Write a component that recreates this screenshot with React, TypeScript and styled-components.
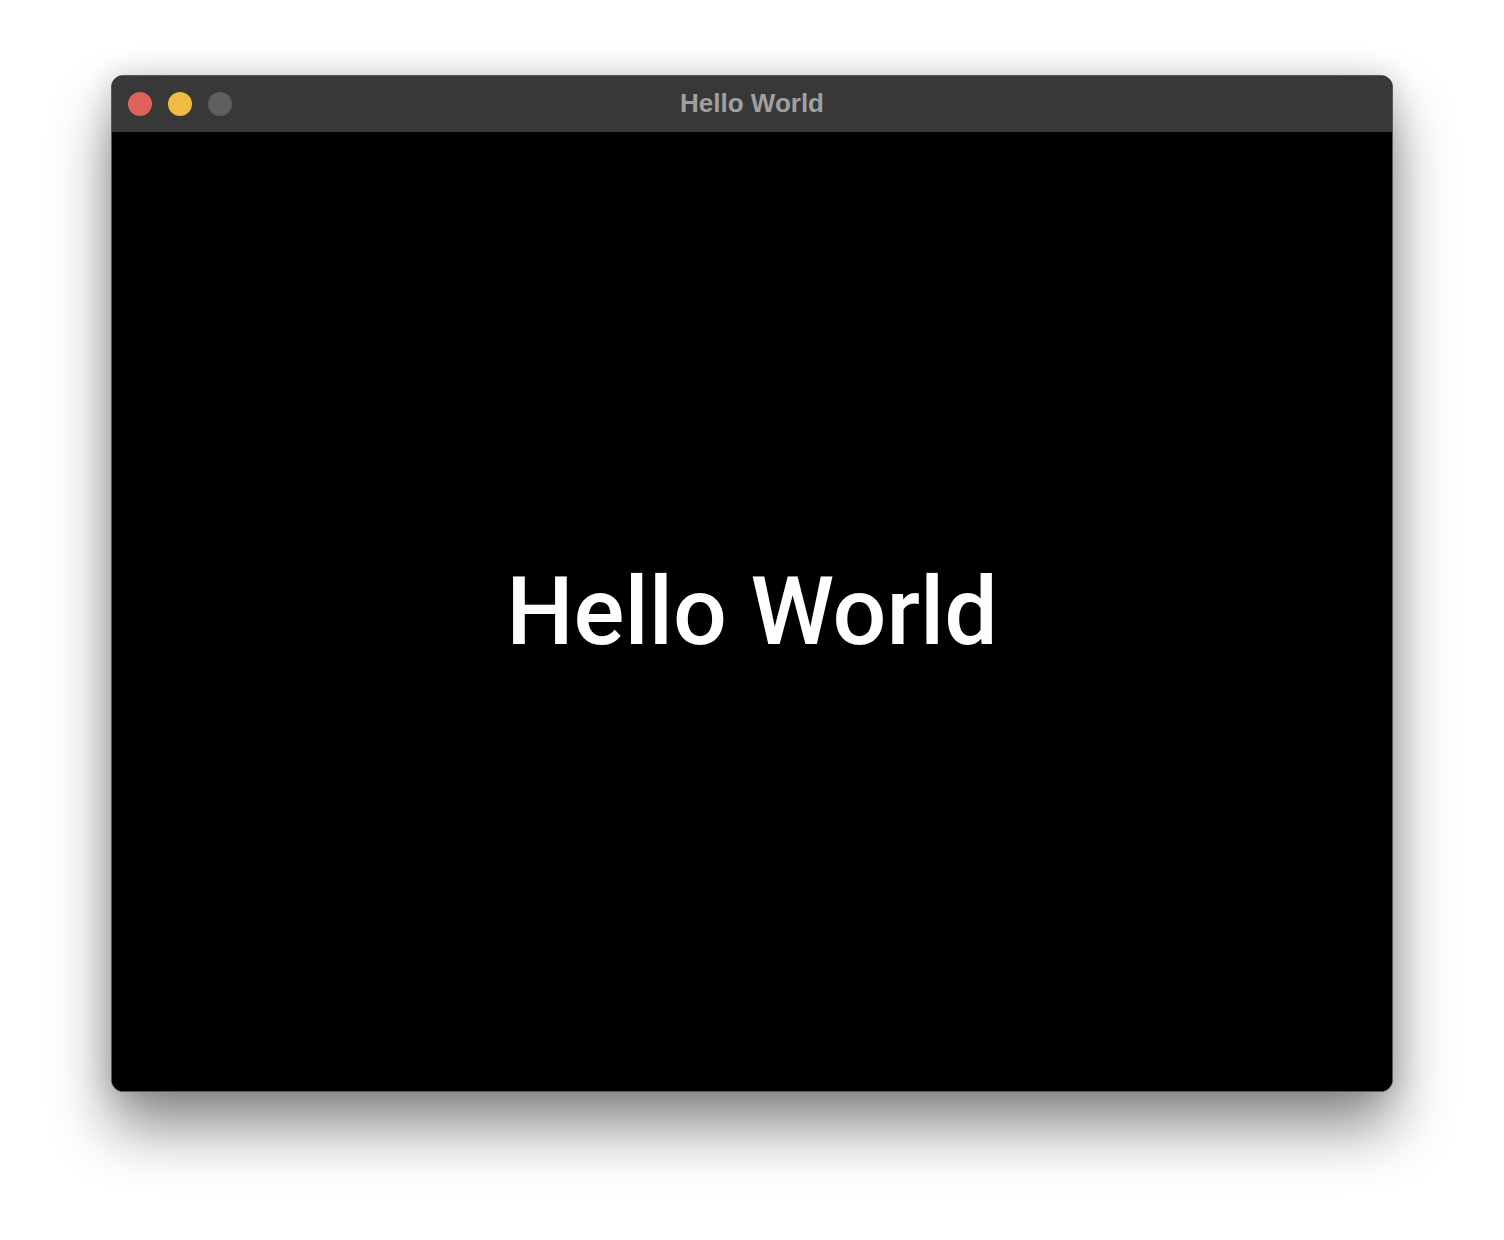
import React from "react";
import styled, { createGlobalStyle } from "styled-components";

const Global = createGlobalStyle`
  html, body { margin: 0; padding: 0; background: #ffffff; }
  body { font-family: Roboto, "Liberation Sans", sans-serif; }
`;

const Page = styled.div`
  width: 1504px;
  height: 1240px;
  display: flex;
  justify-content: center;
  padding-top: 75px;
  box-sizing: border-box;
  background: #ffffff;
`;

const Window = styled.div`
  width: 1282px;
  height: 1017px;
  box-sizing: border-box;
  border-radius: 12px;
  border: 1px solid #5a5a5a;
  background: #000;
  overflow: hidden;
  display: flex;
  flex-direction: column;
  box-shadow: 0 36px 60px rgba(0, 0, 0, 0.45), 0 0 30px rgba(0, 0, 0, 0.16);
`;

const TitleBar = styled.div`
  height: 56px;
  flex: none;
  background: #383838;
  display: flex;
  align-items: center;
  position: relative;
  padding-left: 16px;
  padding-bottom: 1px;
  box-sizing: border-box;
  gap: 16px;
`;

const Light = styled.span<{ $color: string }>`
  width: 24px;
  height: 24px;
  border-radius: 50%;
  background: ${(p) => p.$color};
`;

const Title = styled.div`
  position: absolute;
  left: 0;
  right: 0;
  top: 0;
  bottom: 2px;
  display: flex;
  align-items: center;
  justify-content: center;
  font-family: "Liberation Sans", Arial, sans-serif;
  font-weight: 700;
  font-size: 26px;
  color: #a0a0a0;
  pointer-events: none;
`;

const Content = styled.div`
  flex: 1;
  display: flex;
  align-items: center;
  justify-content: center;
  background: #000;
`;

const Heading = styled.div`
  font-family: Roboto, "Liberation Sans", sans-serif;
  font-size: 95px;
  font-weight: 500;
  color: #ffffff;
  line-height: 1;
`;

export default function App() {
  return (
    <>
      <Global />
      <Page>
        <Window>
          <TitleBar>
            <Light $color="#e0605a" />
            <Light $color="#eebd40" />
            <Light $color="#5e5e5e" />
            <Title>Hello World</Title>
          </TitleBar>
          <Content>
            <Heading>Hello World</Heading>
          </Content>
        </Window>
      </Page>
    </>
  );
}
